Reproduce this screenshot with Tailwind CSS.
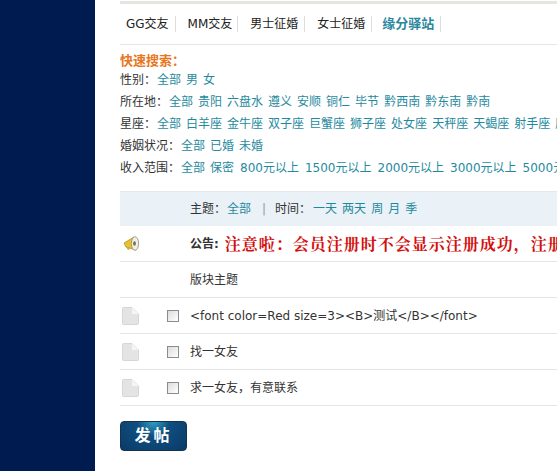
<!DOCTYPE html>
<html lang="zh-CN">

<head>
    <meta charset="UTF-8" />
    <meta name="viewport" content="width=device-width, initial-scale=1.0" />
    <title>缘分驿站</title>
    <script src="https://cdn.jsdelivr.net/npm/@tailwindcss/browser@4"></script>
</head>

<body class="bg-white overflow-hidden font-['DejaVu_Sans','Noto_Sans_CJK_SC',sans-serif] text-[12px] text-[#333]">
    <div class="flex h-[471px] w-[557px] overflow-hidden">
        <!-- left band -->
        <div class="w-[95px] shrink-0 bg-[#001b50]"></div>

        <div class="w-[462px] shrink-0 overflow-hidden pl-[25px] pt-[1px]">
            <div class="w-[700px]">
                <div class="h-[3px] bg-[#e6e6e0]"></div>

                <!-- tabs -->
                <div class="flex h-[41px] items-center border-b border-[#e5e5e5] pl-[6px] text-[#222]">
                    <a class="pr-[6px] border-r border-[#ddd] leading-[16px]">GG交友</a>
                    <a class="pl-[12px] pr-[5px] border-r border-[#ddd] leading-[16px]">MM交友</a>
                    <a class="pl-[12px] pr-[6px] border-r border-[#ddd] leading-[16px]">男士征婚</a>
                    <a class="pl-[12px] pr-[6px] border-r border-[#ddd] leading-[16px]">女士征婚</a>
                    <a class="pl-[10px] pr-[6px] border-r border-[#ddd] leading-[16px] text-[13px] font-bold text-[#2a87a0]">缘分驿站</a>
                </div>

                <!-- quick search -->
                <div class="pt-[5px] h-[146px]">
                    <div class="h-[19px] leading-[22px] text-[13px] font-bold text-[#e8761c]">快速搜索&#xFF1A;</div>
                    <div class="flex h-[22px] items-center gap-[5px]">
                        <span class="-mr-[4px]">性别&#xFF1A;</span>
                        <a class="text-[#1f8a9e]">全部</a><a class="text-[#1f8a9e]">男</a><a class="text-[#1f8a9e]">女</a>
                    </div>
                    <div class="flex h-[22px] items-center gap-[5px]">
                        <span class="-mr-[4px]">所在地&#xFF1A;</span>
                        <a class="text-[#1f8a9e]">全部</a><a class="text-[#1f8a9e]">贵阳</a><a class="text-[#1f8a9e]">六盘水</a><a class="text-[#1f8a9e]">遵义</a><a class="text-[#1f8a9e]">安顺</a><a class="text-[#1f8a9e]">铜仁</a><a class="text-[#1f8a9e]">毕节</a><a class="text-[#1f8a9e]">黔西南</a><a class="text-[#1f8a9e]">黔东南</a><a class="text-[#1f8a9e]">黔南</a>
                    </div>
                    <div class="flex h-[22px] items-center gap-[5px]">
                        <span class="-mr-[4px]">星座&#xFF1A;</span>
                        <a class="text-[#1f8a9e]">全部</a><a class="text-[#1f8a9e]">白羊座</a><a class="text-[#1f8a9e]">金牛座</a><a class="text-[#1f8a9e]">双子座</a><a class="text-[#1f8a9e]">巨蟹座</a><a class="text-[#1f8a9e]">狮子座</a><a class="text-[#1f8a9e]">处女座</a><a class="text-[#1f8a9e]">天秤座</a><a class="text-[#1f8a9e]">天蝎座</a><a class="text-[#1f8a9e]">射手座</a><a class="text-[#1f8a9e]">摩羯座</a>
                    </div>
                    <div class="flex h-[22px] items-center gap-[5px]">
                        <span class="-mr-[4px]">婚姻状况&#xFF1A;</span>
                        <a class="text-[#1f8a9e]">全部</a><a class="text-[#1f8a9e]">已婚</a><a class="text-[#1f8a9e]">未婚</a>
                    </div>
                    <div class="flex h-[22px] items-center gap-[5px]">
                        <span class="-mr-[4px]">收入范围&#xFF1A;</span>
                        <a class="text-[#1f8a9e]">全部</a><a class="text-[#1f8a9e]">保密</a><a class="ml-[1px] text-[#1f8a9e]">800元以上</a><a class="ml-[1px] text-[#1f8a9e]">1500元以上</a><a class="ml-[1px] text-[#1f8a9e]">2000元以上</a><a class="ml-[1px] text-[#1f8a9e]">3000元以上</a><a class="ml-[1px] text-[#1f8a9e]">5000元以上</a>
                    </div>
                </div>

                <!-- filter bar -->
                <div class="flex h-[35px] items-center border-t border-[#e3e8ec] bg-[#eaf1f7] pl-[70px]">
                    <span>主题&#xFF1A;</span>
                    <a class="ml-[1px] text-[#1f8a9e]">全部</a>
                    <span class="ml-[11px] mr-[9px] text-[#999]">|</span>
                    <span>时间&#xFF1A;</span>
                    <a class="ml-[2px] text-[#1f8a9e]">一天</a>
                    <a class="ml-[5px] text-[#1f8a9e]">两天</a>
                    <a class="ml-[5px] text-[#1f8a9e]">周</a>
                    <a class="ml-[5px] text-[#1f8a9e]">月</a>
                    <a class="ml-[5px] text-[#1f8a9e]">季</a>
                </div>

                <!-- notice -->
                <div class="flex h-[36px] items-center border-b border-[#e5e5e5]">
                    <div class="w-[70px] pl-[3px]">
                        <svg width="18" height="18" viewBox="0 0 18 18">
                            <path d="M1 8 L11 2 L13 15 L3 12 Z" fill="#e8c22a" stroke="#a88a18" stroke-width=".7" />
                            <path d="M3 12 L5 15 L7 14 L6 12 Z" fill="#c9a94a" />
                            <ellipse cx="12" cy="8.5" rx="3.6" ry="6.8" fill="#f2f0e6" stroke="#8f8a70" stroke-width=".8" />
                            <ellipse cx="11.5" cy="8.5" rx="1.4" ry="2.2" fill="#77705a" />
                        </svg>
                    </div>
                    <b class="text-[#333]">公告:</b>
                    <b class="ml-[6px] font-['Noto_Serif_CJK_SC','Noto_Sans_CJK_SC',serif] text-[16px] tracking-[1px] text-[#d40f0f] whitespace-nowrap">注意啦&#xFF1A;会员注册时不会显示注册成功&#xFF0C;注册后请直接登录</b>
                </div>

                <div class="flex h-[36px] items-center border-b border-[#e5e5e5] pl-[70px]">版块主题</div>

                <!-- threads -->
                <div class="flex h-[36px] items-center border-b border-[#e5e5e5]">
                    <div class="w-[47px] pl-[2px]">
                        <svg width="17" height="18" viewBox="0 0 17 18">
                            <path d="M.5 1.5 Q.5 .5 1.5 .5 H10 L16.5 7 V16.5 Q16.5 17.5 15.5 17.5 H1.5 Q.5 17.5 .5 16.5 Z" fill="#e4e4e4" stroke="#d6d6d6" />
                            <path d="M10 .5 V7 H16.5 Z" fill="#f6f6f6" />
                        </svg>
                    </div>
                    <div class="w-[23px]">
                        <div class="h-[12px] w-[12px] border border-[#8c8c8c] bg-gradient-to-br from-[#dcdcdc] to-white"></div>
                    </div>
                    <span>&lt;font color=Red size=3&gt;&lt;B&gt;测试&lt;/B&gt;&lt;/font&gt;</span>
                </div>
                <div class="flex h-[36px] items-center border-b border-[#e5e5e5]">
                    <div class="w-[47px] pl-[2px]">
                        <svg width="17" height="18" viewBox="0 0 17 18">
                            <path d="M.5 1.5 Q.5 .5 1.5 .5 H10 L16.5 7 V16.5 Q16.5 17.5 15.5 17.5 H1.5 Q.5 17.5 .5 16.5 Z" fill="#e4e4e4" stroke="#d6d6d6" />
                            <path d="M10 .5 V7 H16.5 Z" fill="#f6f6f6" />
                        </svg>
                    </div>
                    <div class="w-[23px]">
                        <div class="h-[12px] w-[12px] border border-[#8c8c8c] bg-gradient-to-br from-[#dcdcdc] to-white"></div>
                    </div>
                    <span class="mt-[1px]">找一女友</span>
                </div>
                <div class="flex h-[36px] items-center border-b border-[#e5e5e5]">
                    <div class="w-[47px] pl-[2px]">
                        <svg width="17" height="18" viewBox="0 0 17 18">
                            <path d="M.5 1.5 Q.5 .5 1.5 .5 H10 L16.5 7 V16.5 Q16.5 17.5 15.5 17.5 H1.5 Q.5 17.5 .5 16.5 Z" fill="#e4e4e4" stroke="#d6d6d6" />
                            <path d="M10 .5 V7 H16.5 Z" fill="#f6f6f6" />
                        </svg>
                    </div>
                    <div class="w-[23px]">
                        <div class="h-[12px] w-[12px] border border-[#8c8c8c] bg-gradient-to-br from-[#dcdcdc] to-white"></div>
                    </div>
                    <span class="mt-[1px]">求一女友&#xFF0C;有意联系</span>
                </div>

                <!-- post button -->
                <button class="mt-[15px] block h-[30px] w-[67px] rounded-[4px] border border-[#16324f] bg-[radial-gradient(ellipse_at_50%_0%,#2f9fc4_0%,#0f4f80_35%,#0a3a68_100%)] text-center text-[16px] leading-[28px] font-bold tracking-[3px] text-white">发帖</button>
            </div>
        </div>
    </div>
</body>

</html>
